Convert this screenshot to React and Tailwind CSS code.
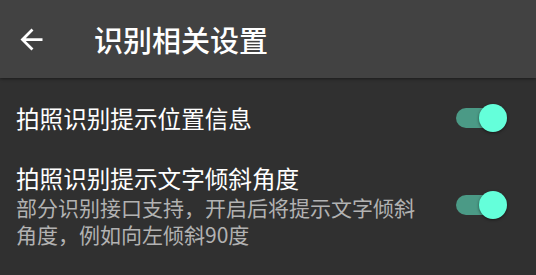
import React, { useState } from 'react';

const font = { fontFamily: '"Noto Sans CJK SC", "Noto Sans", sans-serif' };

function Toggle({ on, onChange }) {
  return (
    <button
      type="button"
      onClick={() => onChange(!on)}
      className="relative flex h-[30px] w-[52px] shrink-0 items-center"
    >
      <span className={`absolute left-[1px] right-[3px] h-[20px] rounded-full ${on ? 'bg-[#4b9a86]' : 'bg-[#6b6b6b]'}`} />
      <span
        className={`absolute top-[1px] h-[28px] w-[28px] rounded-full shadow-[0_1px_3px_rgba(0,0,0,0.5)] ${on ? 'right-0 bg-[#64ffda]' : 'left-0 bg-[#bdbdbd]'}`}
      />
    </button>
  );
}

export default function App() {
  const [location, setLocation] = useState(true);
  const [angle, setAngle] = useState(true);

  return (
    <div className="flex h-[275px] w-[536px] flex-col overflow-hidden bg-[#303030]" style={font}>
      {/* Toolbar */}
      <div className="relative z-10 flex h-[78px] shrink-0 items-center bg-[#424242] shadow-[0_1px_3px_rgba(0,0,0,0.45)]">
        <button type="button" className="ml-[15px] flex h-[33px] w-[33px] items-center justify-center text-white">
          <svg viewBox="0 0 24 24" width="33" height="33" fill="currentColor">
            <path d="M20 11H7.83l5.59-5.59L12 4l-8 8 8 8 1.41-1.41L7.83 13H20v-2z" />
          </svg>
        </button>
        <h1 className="ml-[46px] text-[29px] font-medium leading-none text-white">识别相关设置</h1>
      </div>

      {/* Settings */}
      <div className="flex h-[80px] items-center justify-between pl-[16px] pr-[29px]">
        <span className="text-[23.6px] leading-[32px] text-white">拍照识别提示位置信息</span>
        <Toggle on={location} onChange={setLocation} />
      </div>

      <div className="flex items-center justify-between pl-[16px] pr-[29px] pt-[4px]">
        <div className="w-[410px]">
          <div className="text-[23.6px] leading-[32px] text-white">拍照识别提示文字倾斜角度</div>
          <div className="text-[21px] leading-[27px] text-[#b2b2b2]">
            部分识别接口支持，开启后将提示文字倾斜角度，例如向左倾斜90度
          </div>
        </div>
        <Toggle on={angle} onChange={setAngle} />
      </div>
    </div>
  );
}
